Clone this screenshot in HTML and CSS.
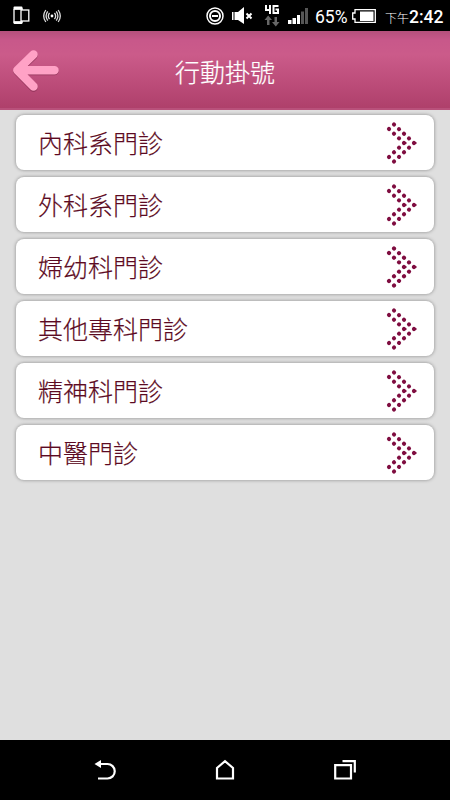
FILE: index.html
```html
<!DOCTYPE html>
<html lang="zh-Hant">

<head>
  <meta charset="UTF-8" />
  <title>行動掛號</title>

  <link rel="stylesheet" href="styles.css">
</head>

<body>
  <!-- icons used more than once -->
  <svg class="sprite">
    <symbol id="chevron" viewBox="0 0 30 42" overflow="visible">
      <path d="M7 2.500L27 21L7 39.500" pathLength="8.01" />
      <path d="M2 7L17 21L2 35" pathLength="6.01" />
    </symbol>
  </svg>

  <div class="status">
    <div class="status-left">
      <svg width="17" height="19" viewBox="0 0 17 19">
        <path d="M1 3V16H9V15M1 3H9V4" fill="none" stroke="#fff" stroke-width="1.3" />
        <path d="M1.500 .5h7q1 0 1 1v2H.5v-2q0-1 1-1zM.5 15.500h9v1.500q0 1-1 1h-7q-1 0-1-1z" fill="#fff" />
        <rect x="8" y="4" width="7.800" height="11" fill="#000" stroke="#fff" stroke-width="1.300" />
      </svg>
      <svg width="18" height="14" viewBox="0 0 18 14">
        <g fill="none" stroke="#ddd" stroke-width="1.300">
          <path d="M6.500 3.800Q4.200 7 6.500 10.200M4.700 2.400Q1.500 7 4.700 11.600M2.800 1Q-1.400 7 2.800 13" />
          <path d="M11.500 3.800Q13.800 7 11.500 10.200M13.300 2.400Q16.500 7 13.300 11.600M15.200 1Q19.400 7 15.200 13" />
        </g>
        <circle cx="9" cy="7" r="1.400" fill="#fff" />
      </svg>
    </div>
    <div class="status-right">
      <svg width="18" height="18" viewBox="0 0 18 18">
        <circle cx="9" cy="9" r="8" fill="none" stroke="#fff" stroke-width="1.500" />
        <circle cx="9" cy="9" r="5" fill="none" stroke="#fff" stroke-width="2" />
        <path d="M6 9h6" stroke="#fff" stroke-width="2" />
      </svg>
      <svg class="mute" width="21" height="18" viewBox="0 0 21 18">
        <path d="M0 5h1.500v8H0zM2.500 5h3.500l6-5v17l-6-4H2.500z" fill="#fff" />
        <path d="M14.500 6.500l5 5M19.500 6.500l-5 5" stroke="#fff" stroke-width="2" />
      </svg>
      <svg class="network" width="16" height="22" viewBox="0 0 16 22">
        <path d="M2 0V5H6.500M6 0V9M14.500 1H9.500V8H14V4.500H11.500" fill="none" stroke="#fff" stroke-width="2" />
        <path d="M4.200 10.500L8 15H5.500V20H3V15H.5zM11.800 21.500L15.500 17H13V12H10.500V17H8z" fill="#666" />
      </svg>
      <svg class="signal" width="20" height="16" viewBox="0 0 20 16">
        <path d="M0 12h3.500v4H0zM4.500 10H8v6H4.500zM9 7h3v9H9z" fill="#fff" />
        <path d="M13 3.500h3V16h-3zM17 0h3v16h-3z" fill="#555" />
      </svg>
      <span class="percent">65%</span>
      <svg class="battery" width="24" height="14" viewBox="0 0 24 14">
        <path d="M3 .7H23.300V13.300H3V10H.7V4H3z" fill="none" stroke="#fff" stroke-width="1.300" />
        <path d="M8 2.500h13.500v9.500H8z" fill="#fff" />
      </svg>
      <span class="ampm">下午</span><span class="clock">2:42</span>
    </div>
  </div>

  <div class="header">
    <svg class="back" width="48" height="43" viewBox="0 0 48 43">
      <g fill="none" stroke-width="8.500" stroke-linecap="round" stroke-linejoin="round">
        <path d="M20.500 6.500L4.300 22L20.500 38.500M5.300 22H41.500" stroke="#8f3157" />
        <path d="M20.500 5.500L4.300 21.300L20.500 37.500M5.300 21.300H41.500" stroke="#ffa2c6" />
      </g>
    </svg>
    <h1>行動掛號</h1>
  </div>

  <ul class="list">
    <li>內科系門診 <svg class="chevron"><use href="#chevron" /></svg></li>
    <li>外科系門診 <svg class="chevron"><use href="#chevron" /></svg></li>
    <li>婦幼科門診 <svg class="chevron"><use href="#chevron" /></svg></li>
    <li>其他專科門診 <svg class="chevron"><use href="#chevron" /></svg></li>
    <li>精神科門診 <svg class="chevron"><use href="#chevron" /></svg></li>
    <li>中醫門診 <svg class="chevron"><use href="#chevron" /></svg></li>
  </ul>

  <div class="navbar">
    <svg width="24" height="22" viewBox="0 0 24 22">
      <path d="M6 5H14.500a7.200 7.200 0 0 1 0 14.500H5" fill="none" stroke="#fff" stroke-width="2.200" />
      <path d="M1.500 5L8 1V9z" fill="#fff" />
    </svg>
    <svg width="24" height="22" viewBox="0 0 24 22">
      <path d="M4 19.500V9L12 2.200L20 9V19.500z" fill="none" stroke="#fff" stroke-width="2.200" />
    </svg>
    <svg width="24" height="22" viewBox="0 0 24 22">
      <path d="M2.200 6.200H18V19.500H2.200zM9.500 2.200H21.800V13.500" fill="none" stroke="#fff" stroke-width="2.200" />
    </svg>
  </div>
</body>

</html>
```
FILE: styles.css
```css
body {
  margin: 0;
  height: 800px;
  display: flex;
  flex-direction: column;
  overflow: hidden;
  background-color: #dfdfdf;
  font-family: "Noto Sans CJK TC", sans-serif;
  font-weight: 300;
}

svg {
  display: block;
  flex: none;
}

.sprite {
  display: none;
}

/* status bar */
.status {
  height: 31px;
  box-sizing: border-box;
  padding: 0 7px 0 13px;
  display: flex;
  justify-content: space-between;
  background-color: #000;
  color: #fff;
}

.status-left,
.status-right {
  display: flex;
  align-items: center;
}

.status-left {
  gap: 13px;
}

.mute {
  margin-left: 8px;
}

.network {
  margin-left: 11px;
}

.signal {
  margin-left: 8px;
}

.percent {
  margin-left: 7px;
  width: 33px;
  font: 400 17.5px/31px Roboto, sans-serif;
  padding-top: 3px;
}

.battery {
  margin-left: 4px;
}

.ampm {
  margin-left: 9px;
  font-size: 12px;
  line-height: 31px;
  padding-top: 4px;
}

.clock {
  width: 34px;
  font: 500 17.5px/31px Roboto, sans-serif;
  padding-top: 3px;
}

/* title bar */
.header {
  height: 79px;
  box-sizing: border-box;
  padding: 0 13px;
  display: grid;
  grid-template-columns: 48px 1fr 48px;
  align-items: center;
  background: linear-gradient(#b5507c, #c8588a 12%, #cb5b8a 30%, #af406b 97%, #b9517b 98%);
}

.header h1 {
  margin: 0;
  color: #fff;
  font-size: 25px;
  font-weight: 300;
  line-height: 36px;
  text-align: center;
  -webkit-text-stroke: 0.2px #fff;
}

/* departments */
.list {
  flex: 1;
  margin: 0;
  padding: 5px 16px;
  display: flex;
  flex-direction: column;
  gap: 7px;
  list-style: none;
}

.list li {
  height: 55px;
  box-sizing: border-box;
  padding: 0 17px 0 22px;
  display: flex;
  align-items: center;
  justify-content: space-between;
  border-radius: 8px;
  background-color: #fff;
  box-shadow: 0 0 3px 1px #aaa;
  color: #5c0a22;
  font-size: 25px;
  line-height: 55px;
  -webkit-text-stroke: 0.2px #5c0a22;
}

/* each line is a row of round dots */
.chevron {
  width: 30px;
  height: 42px;
  overflow: visible;
  fill: none;
  stroke: #7f0d40;
  stroke-width: 4.1;
  stroke-linecap: round;
  stroke-dasharray: 0.01 0.99;
}

/* bottom buttons */
.navbar {
  height: 60px;
  display: flex;
  align-items: center;
  justify-content: center;
  gap: 96px;
  background-color: #000;
}
```
